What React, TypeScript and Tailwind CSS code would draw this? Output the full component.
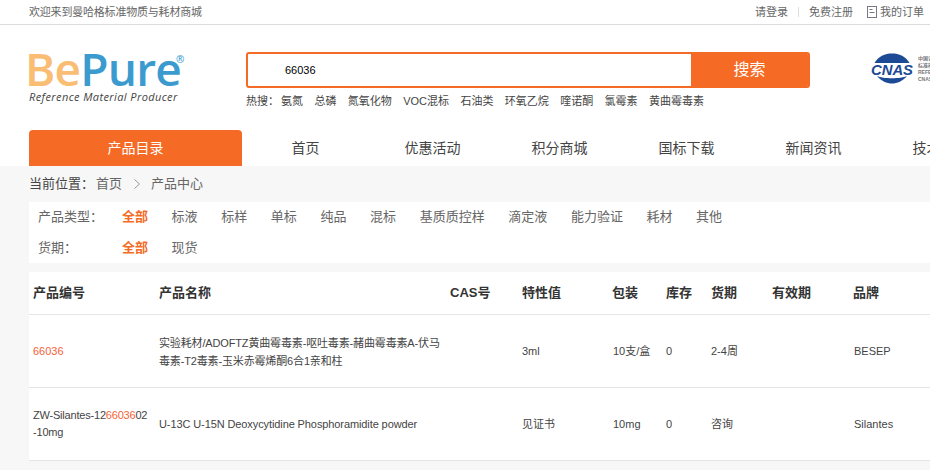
import React from "react";

const hotWords = ["氨氮", "总磷", "氮氧化物", "VOC混标", "石油类", "环氧乙烷", "喹诺酮", "氯霉素", "黄曲霉毒素"];
const navItems = ["首页", "优惠活动", "积分商城", "国标下载", "新闻资讯", "技术支持"];
const productTypes = ["标液", "标样", "单标", "纯品", "混标", "基质质控样", "滴定液", "能力验证", "耗材", "其他"];
const columns = ["产品编号", "产品名称", "CAS号", "特性值", "包装", "库存", "货期", "有效期", "品牌"];
const gridCols = "grid grid-cols-[126px_291px_72px_90px_54px_45px_61px_81px_100px] px-1";

const Logo = () => (
  <div className="w-[155px] shrink-0 pt-[25px]">
    <div className="relative h-[37px] ml-[-4px] text-[46px] leading-[37px] font-['Open_Sans',sans-serif] font-semibold tracking-[-0.8px] whitespace-nowrap">
      <span className="text-[#f9bd74]">Be</span>
      <span className="text-[#3b9bcf]">Pure</span>
      <span className="absolute left-[151px] top-[4px] text-[10px] leading-[10px] text-[#3b9bcf]">®</span>
    </div>
    <div className="mt-[3px] text-[11px] leading-[13px] italic font-medium text-[#444] whitespace-nowrap font-['Open_Sans',sans-serif] tracking-[0.4px]">
      Reference Material Producer
    </div>
  </div>
);

const CnasLogo = () => (
  <div className="flex items-center gap-[5px] shrink-0 pt-[28px] ml-[61px]">
    <svg width="42" height="31" viewBox="0 0 42 31" aria-label="CNAS">
      <path d="M3 11 C7 3 14 0.5 21 0.5 C28 0.5 35 3 39 11 Z" fill="#1d4a95" />
      <path d="M6 23 C10 28 16 30.5 21 30.5 C26 30.5 32 28 36 23 C30 26 12 26 6 23 Z" fill="#1d4a95" />
      <rect x="0" y="10" width="42" height="13" fill="white" />
      <text x="0" y="21.5" textLength="42" lengthAdjust="spacingAndGlyphs" fontSize="15" fontWeight="700" fontStyle="italic" fontFamily="Liberation Sans" fill="#1d4a95">
        CNAS
      </text>
    </svg>
    <div className="text-[5px] leading-[7px] text-[#777] whitespace-nowrap font-bold">
      <div>中国认可</div>
      <div>标准样品</div>
      <div>REFERENCE</div>
      <div>CNAS RM</div>
    </div>
  </div>
);

export default function App() {
  return (
    <div className="w-[930px] h-[470px] overflow-hidden bg-white text-[#333] font-['Liberation_Sans','Noto_Sans_CJK_SC',sans-serif]">
      {/* top bar */}
      <div className="h-[25px] border-b border-[#ddd] pl-[29px] pr-[6px] flex items-center justify-between text-[11px] text-[#666]">
        <span className="tracking-[-0.2px]">欢迎来到曼哈格标准物质与耗材商城</span>
        <div className="flex items-center">
          <span>请登录</span>
          <span className="mx-[10px] w-px h-[10px] bg-[#ddd]" />
          <span>免费注册</span>
          <svg width="10" height="12" viewBox="0 0 10 12" className="ml-[14px] mr-[3px]" fill="none" stroke="#778">
            <rect x="0.5" y="0.5" width="9" height="11" />
            <path d="M2.5 3.5h3M2.5 6.5h5" />
          </svg>
          <span>我的订单</span>
        </div>
      </div>

      {/* logo + search */}
      <div className="h-[105px] pl-[29px] flex items-start overflow-hidden">
        <Logo />
        <div className="ml-[62px] w-[564px] shrink-0 pt-[27px]">
          <div className="h-[36px] flex border-2 border-[#f56b26] rounded-[3px] overflow-hidden">
            <div className="flex-1 pl-[37px] text-[11px] leading-[32px] text-black">66036</div>
            <div className="w-[117px] bg-[#f56b26] text-white text-[16px] leading-[32px] text-center">搜索</div>
          </div>
          <div className="mt-[6px] flex gap-[11.4px] text-[11px] leading-[14px] text-[#444] whitespace-nowrap">
            <span className="mr-[-9.4px]">热搜：</span>
            {hotWords.map((w) => (
              <span key={w}>{w}</span>
            ))}
          </div>
        </div>
        <CnasLogo />
      </div>

      {/* nav */}
      <div className="h-[36px] pl-[29px] flex text-[14px] leading-[36px] whitespace-nowrap">
        <div className="w-[213px] shrink-0 bg-[#f56b26] text-white text-center rounded-t-[4px]">产品目录</div>
        {navItems.map((n) => (
          <div key={n} className="w-[127px] shrink-0 text-center text-[#444]">
            {n}
          </div>
        ))}
      </div>

      {/* content */}
      <div className="h-[304px] bg-[#f7f7f7] pl-[29px]">
        <div className="h-[36px] pb-px flex items-center text-[13px] text-[#666]">
          <span className="text-[#444] mr-[2px]">当前位置：</span>
          <span>首页</span>
          <svg width="8" height="12" viewBox="0 0 8 12" fill="none" stroke="#999" className="ml-[11px] mr-[10px]">
            <path d="M1.5 1.5L6.5 6L1.5 10.5" />
          </svg>
          <span>产品中心</span>
        </div>

        <div className="h-[61px] bg-white text-[13px] text-[#666] whitespace-nowrap">
          <div className="h-[30px] flex items-center pl-[9px]">
            <span className="w-[84px]">产品类型：</span>
            <div className="flex gap-[23.6px]">
              <span className="font-bold text-[#f56b26]">全部</span>
              {productTypes.map((t) => (
                <span key={t}>{t}</span>
              ))}
            </div>
          </div>
          <div className="h-[31px] flex items-center pl-[9px]">
            <span className="w-[84px]">货期：</span>
            <div className="flex gap-[23.6px]">
              <span className="font-bold text-[#f56b26]">全部</span>
              <span>现货</span>
            </div>
          </div>
        </div>

        <div className="mt-[9px] bg-white text-[11px] text-[#444]">
          <div className={`${gridCols} h-[43px] pb-px items-center border-b border-[#e5e5e5] text-[13px] font-bold text-[#333]`}>
            {columns.map((c) => (
              <div key={c}>{c}</div>
            ))}
          </div>
          <div className={`${gridCols} h-[73px] items-center border-b border-[#e5e5e5]`}>
            <div className="text-[#f4623a]">66036</div>
            <div className="leading-[18px] pt-[2px] tracking-[-0.15px]">实验耗材/ADOFTZ黄曲霉毒素-呕吐毒素-赭曲霉毒素A-伏马毒素-T2毒素-玉米赤霉烯酮6合1亲和柱</div>
            <div />
            <div>3ml</div>
            <div className="pl-px">10支/盒</div>
            <div>0</div>
            <div>2-4周</div>
            <div />
            <div className="pl-px">BESEP</div>
          </div>
          <div className={`${gridCols} h-[73px] items-center border-b border-[#e5e5e5]`}>
            <div className="leading-[17px] tracking-[-0.2px] whitespace-nowrap">
              ZW-Silantes-12<span className="text-[#f4623a]">66036</span>02
              <br />
              -10mg
            </div>
            <div className="tracking-[-0.1px]">U-13C U-15N Deoxycytidine Phosphoramidite powder</div>
            <div />
            <div>见证书</div>
            <div className="pl-px">10mg</div>
            <div>0</div>
            <div>咨询</div>
            <div />
            <div className="pl-px">Silantes</div>
          </div>
        </div>
      </div>
    </div>
  );
}
